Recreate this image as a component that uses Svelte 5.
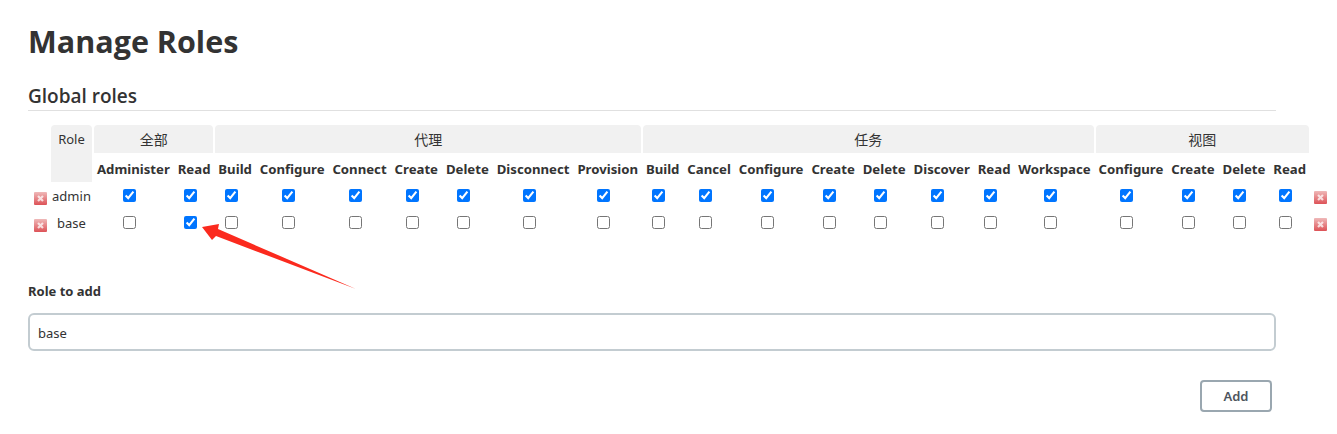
<script lang="ts">
    // ── Mock data ──────────────────────────────────
    const groups = [
        { name: '全部', perms: ['Administer', 'Read'] },
        { name: '代理', perms: ['Build', 'Configure', 'Connect', 'Create', 'Delete', 'Disconnect', 'Provision'] },
        { name: '任务', perms: ['Build', 'Cancel', 'Configure', 'Create', 'Delete', 'Discover', 'Read', 'Workspace'] },
        { name: '视图', perms: ['Configure', 'Create', 'Delete', 'Read'] }
    ];

    const columns = groups.flatMap((g) => g.perms.map((p) => g.name + p));

    const roles = [
        { name: 'admin', granted: columns },
        { name: 'base', granted: ['全部Read'] }
    ];

    let roleToAdd = $state('base');
</script>

{#snippet deleteIcon()}
    <svg class="del" width="13" height="13" viewBox="0 0 13 13" aria-label="delete">
        <defs>
            <linearGradient id="delred" x1="0" y1="0" x2="0" y2="1">
                <stop offset="0" stop-color="#efb9b9" />
                <stop offset="1" stop-color="#dd5257" />
            </linearGradient>
        </defs>
        <rect width="13" height="13" rx="1" fill="url(#delred)" />
        <path d="M4 4l5 5M9 4l-5 5" stroke="#fff" stroke-width="2.2" stroke-opacity="0.75" />
    </svg>
{/snippet}

<main>
    <h1>Manage Roles</h1>
    <h2>Global roles</h2>

    <table>
        <thead>
            <tr>
                <th class="icon-col"></th>
                <th class="group role-head" rowspan="2">Role</th>
                {#each groups as group}
                    <th class="group" colspan={group.perms.length}>{group.name}</th>
                {/each}
                <th class="icon-col"></th>
            </tr>
            <tr>
                <th class="icon-col"></th>
                {#each groups as group}
                    {#each group.perms as perm}
                        <th class="perm">{perm}</th>
                    {/each}
                {/each}
                <th class="icon-col"></th>
            </tr>
        </thead>
        <tbody>
            {#each roles as role}
                <tr>
                    <td class="icon-col">{@render deleteIcon()}</td>
                    <td class="role-name">{role.name}</td>
                    {#each columns as col}
                        <td class="check"><input type="checkbox" checked={role.granted.includes(col)} /></td>
                    {/each}
                    <td class="icon-col right">{@render deleteIcon()}</td>
                </tr>
            {/each}
        </tbody>
    </table>

    <label for="role-to-add">Role to add</label>
    <input id="role-to-add" class="text" type="text" bind:value={roleToAdd} />

    <div class="actions">
        <button type="button">Add</button>
    </div>

    <!-- annotation drawn over the screenshot -->
    <svg class="arrow" width="160" height="90" viewBox="200 210 160 90">
        <path d="M202 227 L219 224 L218 229 L356 289 L216 236 L212 240 Z" fill="#fb2a1e" />
    </svg>
</main>

<style>
    :global(body) {
        margin: 0;
        background: #fff;
        overflow: hidden;
    }

    main {
        position: relative;
        width: 1248px;
        padding: 0 61px 0 28px;
        color: #333;
        font-family: "Noto Sans", "Noto Sans CJK SC", sans-serif;
        font-size: 13px;
    }

    h1 {
        margin: 0;
        padding-top: 20px;
        font-size: 30.5px;
        line-height: 42px;
        font-weight: 700;
        font-family: "Open Sans", sans-serif;
    }

    h2 {
        margin: 0;
        padding-top: 20px;
        height: 28px;
        line-height: 28px;
        font-size: 19px;
        font-weight: 600;
        font-family: "Open Sans", sans-serif;
        border-bottom: 1px solid #e0e0e0;
    }

    table {
        margin-top: 14px;
        border-collapse: separate;
        border-spacing: 2px 0;
        white-space: nowrap;
    }

    th,
    td {
        padding: 0;
        text-align: center;
    }

    .group {
        height: 28px;
        padding: 0;
        background: #f1f1f1;
        border-radius: 4px 4px 0 0;
        font-weight: 400;
        font-size: 14px;
    }

    .role-head {
        vertical-align: top;
        padding-top: 5px;
        width: 41px;
        min-width: 41px;
        height: 51px;
        box-sizing: border-box;
        font-size: 13px;
    }

    .perm {
        box-sizing: border-box;
        height: 29px;
        padding: 2px 2.95px 0;
        font-size: 13.2px;
        font-weight: 700;
    }

    .icon-col {
        width: 19px;
        min-width: 19px;
    }

    .del {
        display: block;
        margin: 5px 0 0 4px;
    }

    .right .del {
        margin: 4px 0 0 3px;
    }

    tbody tr {
        height: 27px;
    }

    .role-name {
        font-size: 13px;
    }

    /* checkboxes sit a little left of the column centre */
    .check {
        padding-right: 8px;
    }

    .check input {
        display: block;
        margin: 0 auto;
        width: 13px;
        height: 13px;
        accent-color: #0075ff;
    }

    label {
        display: block;
        margin-top: 46px;
        font-size: 13px;
        font-weight: 700;
        line-height: 18px;
    }

    .text {
        display: block;
        box-sizing: border-box;
        width: 100%;
        height: 38px;
        margin-top: 13px;
        padding: 1px 8px 0;
        border: 2px solid #c3ccd1;
        border-radius: 6px;
        color: #333;
        font: 13px "Noto Sans", sans-serif;
        outline: none;
    }

    .actions {
        display: flex;
        justify-content: flex-end;
        margin-top: 29px;
        padding-right: 4px;
    }

    button {
        width: 72px;
        height: 32px;
        background: #fff;
        border: 2px solid #9aa7b0;
        border-radius: 4px;
        color: #4d545d;
        font: 600 13px "Noto Sans", sans-serif;
    }

    .arrow {
        position: absolute;
        left: 200px;
        top: 210px;
        width: 160px;
        height: 90px;
        pointer-events: none;
    }
</style>
